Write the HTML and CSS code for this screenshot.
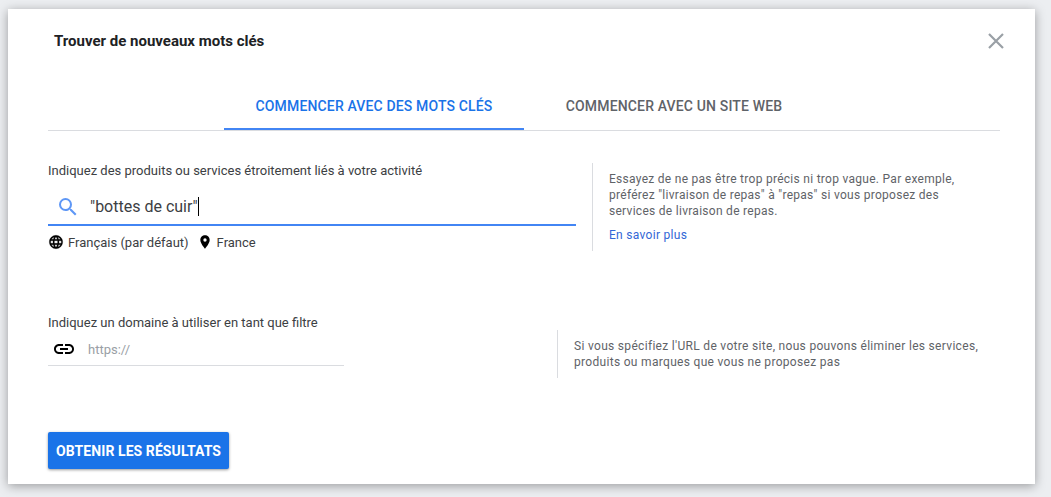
FILE: index.html
```html
<!DOCTYPE html>
<html lang="fr">
<head>
<meta charset="utf-8">
<title>Trouver de nouveaux mots clés</title>
<link rel="stylesheet" href="styles.css">
</head>
<body>
<div class="modal">
  <header class="head">
    <h1 class="title">Trouver de nouveaux mots clés</h1>
    <svg class="close" viewBox="0 0 16 16" width="16" height="16"><path d="M1 1L15 15M15 1L1 15" fill="none" stroke="#9aa0a6" stroke-width="2.2"/></svg>
  </header>
  <nav class="tabs">
    <div class="tab active">COMMENCER AVEC DES MOTS CLÉS</div>
    <div class="tab">COMMENCER AVEC UN SITE WEB</div>
  </nav>
  <section class="row first">
    <div class="field-main">
      <div class="label">Indiquez des produits ou services étroitement liés à votre activité</div>
      <div class="search">
        <svg class="search-icon" viewBox="0 0 24 24" width="24" height="24"><path fill="#5e97f6" d="M15.5 14h-.79l-.28-.27A6.47 6.47 0 0 0 16 9.5 6.5 6.5 0 1 0 9.5 16c1.61 0 3.09-.59 4.23-1.57l.27.28v.79l5 4.99L20.49 19l-4.99-5zm-6 0C7.01 14 5 11.99 5 9.5S7.01 5 9.5 5 14 7.01 14 9.5 11.99 14 9.5 14z"/></svg>
        <span class="query">"bottes de cuir"</span><span class="caret"></span>
      </div>
      <div class="meta">
        <svg class="meta-icon" viewBox="0 0 24 24" width="16" height="16"><path fill="#000" stroke="#000" stroke-width=".4" d="M11.99 2C6.47 2 2 6.48 2 12s4.47 10 9.99 10C17.52 22 22 17.52 22 12S17.52 2 11.99 2zm6.93 6h-2.95a15.65 15.65 0 0 0-1.38-3.56A8.03 8.03 0 0 1 18.92 8zM12 4.04c.83 1.2 1.48 2.53 1.91 3.96h-3.82c.43-1.43 1.08-2.76 1.91-3.96zM4.26 14C4.1 13.36 4 12.69 4 12s.1-1.36.26-2h3.38c-.08.66-.14 1.32-.14 2s.06 1.34.14 2H4.26zm.82 2h2.95c.32 1.25.78 2.45 1.38 3.56A7.987 7.987 0 0 1 5.08 16zm2.95-8H5.08a7.987 7.987 0 0 1 4.33-3.56A15.65 15.65 0 0 0 8.03 8zM12 19.96c-.83-1.2-1.48-2.53-1.91-3.96h3.82c-.43 1.43-1.08 2.76-1.91 3.96zM14.34 14H9.66c-.09-.66-.16-1.32-.16-2s.07-1.35.16-2h4.68c.09.65.16 1.32.16 2s-.07 1.34-.16 2zm.25 5.56c.6-1.11 1.06-2.31 1.38-3.56h2.95a8.03 8.03 0 0 1-4.33 3.56zM16.36 14c.08-.66.14-1.32.14-2s-.06-1.34-.14-2h3.38c.16.64.26 1.31.26 2s-.1 1.36-.26 2h-3.38z"/></svg>
        <span class="meta-text lang">Français (par défaut)</span>
        <svg class="meta-icon pin" viewBox="0 0 24 24" width="16" height="16"><path fill="#000" d="M12 2C8.13 2 5 5.13 5 9c0 5.25 7 13 7 13s7-7.75 7-13c0-3.87-3.13-7-7-7zm0 9.5a2.5 2.5 0 0 1 0-5 2.5 2.5 0 0 1 0 5z"/></svg>
        <span class="meta-text">France</span>
      </div>
    </div>
    <aside class="hint hint-main">
      <p class="hint-text">Essayez de ne pas être trop précis ni trop vague. Par exemple, préférez "livraison de repas" à "repas" si vous proposez des services de livraison de repas.</p>
      <a class="more" href="#">En savoir plus</a>
    </aside>
  </section>
  <section class="row second">
    <div class="field-domain">
      <div class="label">Indiquez un domaine à utiliser en tant que filtre</div>
      <div class="domain">
        <svg class="link-icon" viewBox="0 0 24 24" width="24" height="24"><path fill="#000" d="M3.9 12c0-1.71 1.39-3.1 3.1-3.1h4V7H7c-2.76 0-5 2.24-5 5s2.24 5 5 5h4v-1.9H7c-1.71 0-3.1-1.39-3.1-3.1zM8 13h8v-2H8v2zm9-6h-4v1.9h4c1.71 0 3.1 1.39 3.1 3.1s-1.39 3.1-3.1 3.1h-4V17h4c2.76 0 5-2.24 5-5s-2.24-5-5-5z"/></svg>
        <span class="placeholder">https://</span>
      </div>
    </div>
    <aside class="hint hint-domain">
      <p class="hint-text">Si vous spécifiez l'URL de votre site, nous pouvons éliminer les services, produits ou marques que vous ne proposez pas</p>
    </aside>
  </section>
  <button class="submit" type="button">OBTENIR LES RÉSULTATS</button>
</div>
</body>
</html>
```
FILE: styles.css
```css
* { box-sizing: border-box; }
html, body { margin: 0; height: 497px; overflow: hidden; }
body {
  background: #eceef1;
  padding: 9px 16px 13px 8px;
  font-family: Roboto, "Liberation Sans", sans-serif;
}
.modal {
  width: 1027px;
  height: 475px;
  background: #fff;
  box-shadow: 0 2px 10px rgba(0, 0, 0, .35);
  padding: 0 35px 0 40px;
  display: flex;
  flex-direction: column;
}
.head {
  display: flex;
  justify-content: space-between;
  align-items: center;
  height: 64px;
  padding-left: 6px;
  margin-right: -32px;
}
.title { margin: 0; font-size: 15px; font-weight: 700; color: #202124; }
.close { display: block; margin-right: 28px; }
.tabs {
  display: flex;
  justify-content: center;
  height: 58px;
  border-bottom: 1px solid #dadce0;
}
.tab {
  width: 300px;
  height: 57px;
  padding-top: 11px;
  display: flex;
  align-items: center;
  justify-content: center;
  font-size: 14px;
  font-weight: 500;
  letter-spacing: .15px;
  color: #5f6368;
  border-bottom: 2px solid transparent;
}
.tab.active { color: #1a73e8; border-bottom-color: #4285f4; }
.row { display: flex; }
.first { margin-top: 32px; height: 88px; }
.field-main { width: 528px; }
.label { font-size: 13px; line-height: 16px; color: #3c4043; }
.search {
  display: flex;
  align-items: center;
  height: 37px;
  margin-top: 10px;
  border-bottom: 2px solid #4285f4;
  padding-left: 8px;
}
.search-icon { display: block; margin-right: 10px; }
.query { font-size: 16px; color: #3c4043; }
.caret { width: 1px; height: 19px; background: #000; }
.meta { display: flex; align-items: center; margin-top: 8px; height: 16px; }
.meta-icon { display: block; margin-right: 4px; }
.meta-text { font-size: 13px; color: #3c4043; }
.lang { margin-right: 8px; }
.hint { border-left: 1px solid #dadce0; padding-left: 16px; }
.hint-main { margin-left: 16px; width: 408px; }
.hint-text { margin: 0; font-size: 12px; line-height: 16px; color: #5f6368; letter-spacing: .28px; }
.hint-main .hint-text { margin-top: 8px; width: 360px; }
.more { display: block; margin-top: 8px; font-size: 12px; line-height: 16px; letter-spacing: .3px; color: #3367d6; text-decoration: none; }
.second { margin-top: 64px; height: 63px; }
.field-domain { width: 296px; }
.domain {
  display: flex;
  align-items: center;
  height: 35px;
  border-bottom: 1px solid #dadce0;
  padding: 2px 0 0 4px;
}
.link-icon { display: block; margin-right: 12px; }
.placeholder { font-size: 13px; color: #9aa0a6; }
.hint-domain { margin: 15px 0 0 213px; width: 443px; }
.hint-domain .hint-text { padding-top: 8px; letter-spacing: .31px; }
.submit {
  margin-top: 54px;
  width: 181px;
  height: 37px;
  padding: 0;
  border: 0;
  border-radius: 2px;
  background: #1a73e8;
  color: #fff;
  font: 700 14px Roboto, sans-serif;
  letter-spacing: .08px;
  box-shadow: 0 1px 3px rgba(0, 0, 0, .4);
}
```
